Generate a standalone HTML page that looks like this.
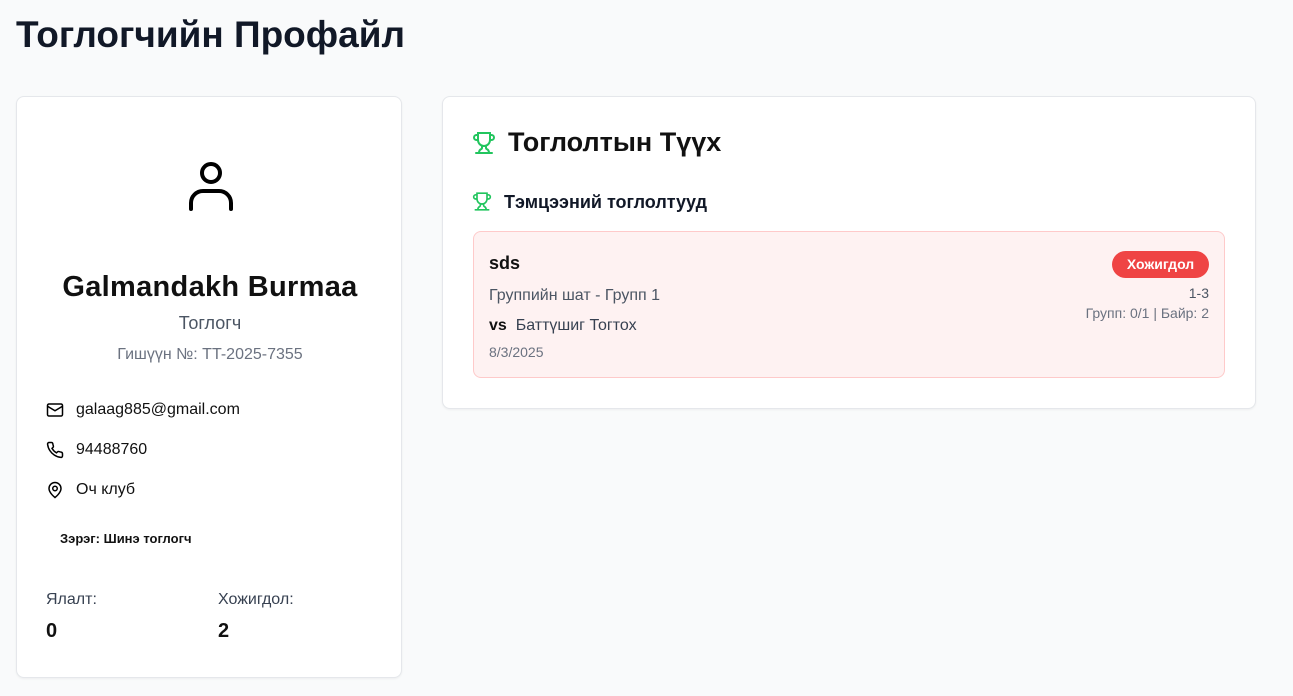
<!DOCTYPE html>
<html><head><meta charset="utf-8"><style>
*{box-sizing:border-box;margin:0;padding:0}
body{width:1293px;height:696px;background:#f9fafb;font-family:"Liberation Sans",sans-serif;color:#111;position:relative;overflow:hidden}
.abs{position:absolute}
h1{position:absolute;left:16px;top:14px;font-size:37px;font-weight:700;color:#111827}
.card{position:absolute;background:#fff;border:1px solid #e5e7eb;border-radius:8px;box-shadow:0 1px 2px rgba(0,0,0,.05)}
.row{position:absolute;left:46px;font-size:16px;display:flex;align-items:center;gap:12px}
</style></head><body>
<h1>Тоглогчийн Профайл</h1>
<div class="card" style="left:16px;top:96px;width:386px;height:582px">
<svg class="abs" style="left:170px;top:62px" width="48" height="56" viewBox="0 0 48 56" fill="none" stroke="#000" stroke-width="4" stroke-linecap="round"><circle cx="24" cy="14" r="9"/><path d="M4 50v-6a12 12 0 0 1 12-12h16a12 12 0 0 1 12 12v6"/></svg>
<div class="abs" style="left:0;width:386px;top:174px;text-align:center;font-size:29px;font-weight:700;letter-spacing:0.3px">Galmandakh Burmaa</div>
<div class="abs" style="left:0;width:386px;top:216px;text-align:center;font-size:18px;color:#4b5563">Тоглогч</div>
<div class="abs" style="left:0;width:386px;top:249px;text-align:center;font-size:16px;color:#6b7280">Гишүүн №: TT-2025-7355</div>
</div>
<div class="row" style="top:401px"><svg width="18" height="18" viewBox="0 0 24 24" fill="none" stroke="#000" stroke-width="2"><rect x="2" y="4" width="20" height="16" rx="2"/><path d="M2 7l10 6 10-6"/></svg>galaag885@gmail.com</div>
<div class="row" style="top:441px"><svg width="18" height="18" viewBox="0 0 24 24" fill="none" stroke="#000" stroke-width="2"><path d="M22 16.9v3a2 2 0 0 1-2.2 2 19.8 19.8 0 0 1-8.6-3.1 19.5 19.5 0 0 1-6-6A19.8 19.8 0 0 1 2.1 4.2 2 2 0 0 1 4.1 2h3a2 2 0 0 1 2 1.7c.1 1 .4 1.9.7 2.8a2 2 0 0 1-.5 2.1L8 9.8a16 16 0 0 0 6 6l1.3-1.3a2 2 0 0 1 2.1-.4c.9.3 1.8.6 2.8.7a2 2 0 0 1 1.7 2z"/></svg>94488760</div>
<div class="row" style="top:481px"><svg width="18" height="18" viewBox="0 0 24 24" fill="none" stroke="#000" stroke-width="2"><path d="M20 10c0 6-8 12-8 12s-8-6-8-12a8 8 0 0 1 16 0z"/><circle cx="12" cy="10" r="3"/></svg>Оч клуб</div>
<div class="abs" style="left:60px;top:531px;font-size:13px;font-weight:700">Зэрэг: Шинэ тоглогч</div>
<div class="abs" style="left:46px;top:591px;font-size:16px;color:#374151">Ялалт:</div>
<div class="abs" style="left:46px;top:620px;font-size:20px;font-weight:700">0</div>
<div class="abs" style="left:218px;top:591px;font-size:16px;color:#374151">Хожигдол:</div>
<div class="abs" style="left:218px;top:620px;font-size:20px;font-weight:700">2</div>

<div class="card" style="left:442px;top:96px;width:814px;height:313px"></div>
<svg class="abs" style="left:472px;top:130px" width="24" height="26" viewBox="0 0 24 24" fill="none" stroke="#22c55e" stroke-width="2" stroke-linecap="round"><path d="M6 9H4.5a2.5 2.5 0 0 1 0-5H6M18 9h1.5a2.5 2.5 0 0 0 0-5H18M4 22h16M10 14.7V17c0 .6-.5 1-1 1.2C7.8 18.8 7 20.2 7 22M14 14.7V17c0 .6.5 1 1 1.2 1.2.6 2 2 2 3.8M18 2H6v7a6 6 0 0 0 12 0V2z"/></svg>
<div class="abs" style="left:508px;top:127px;font-size:27px;font-weight:700">Тоглолтын Түүх</div>
<svg class="abs" style="left:472px;top:191px" width="20" height="21" viewBox="0 0 24 24" fill="none" stroke="#22c55e" stroke-width="2" stroke-linecap="round"><path d="M6 9H4.5a2.5 2.5 0 0 1 0-5H6M18 9h1.5a2.5 2.5 0 0 0 0-5H18M4 22h16M10 14.7V17c0 .6-.5 1-1 1.2C7.8 18.8 7 20.2 7 22M14 14.7V17c0 .6.5 1 1 1.2 1.2.6 2 2 2 3.8M18 2H6v7a6 6 0 0 0 12 0V2z"/></svg>
<div class="abs" style="left:504px;top:192px;font-size:18px;font-weight:700;color:#111827">Тэмцээний тоглолтууд</div>
<div class="abs" style="left:473px;top:231px;width:752px;height:147px;background:#fef2f2;border:1px solid #fecaca;border-radius:8px"></div>
<div class="abs" style="left:489px;top:253px;font-size:18px;font-weight:700">sds</div>
<div class="abs" style="left:489px;top:287px;font-size:16px;color:#4b5563">Группийн шат - Групп 1</div>
<div class="abs" style="left:489px;top:317px;font-size:16px;color:#374151"><b style="color:#111">vs</b>&nbsp; Баттүшиг Тогтох</div>
<div class="abs" style="left:489px;top:344px;font-size:14px;color:#6b7280">8/3/2025</div>
<div class="abs" style="left:1112px;top:251px;width:97px;height:27px;background:#ef4444;border-radius:14px;color:#fff;font-size:14px;font-weight:700;text-align:center;line-height:27px">Хожигдол</div>
<div class="abs" style="right:84px;top:285px;font-size:14px;color:#4b5563">1-3</div>
<div class="abs" style="right:84px;top:305px;font-size:14px;color:#6b7280">Групп: 0/1 | Байр: 2</div>
</body></html>
